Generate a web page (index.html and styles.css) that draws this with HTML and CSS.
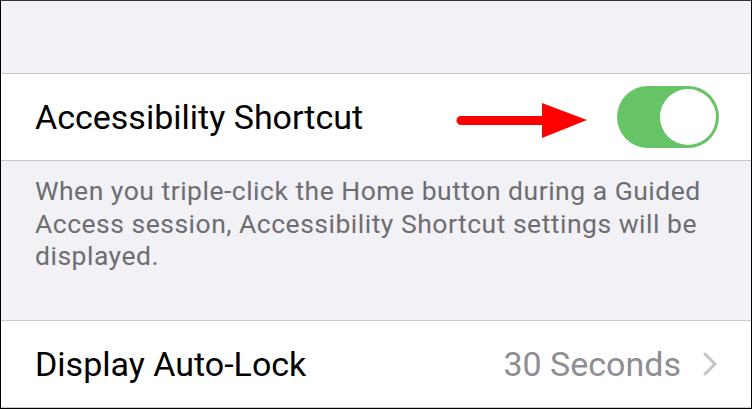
FILE: index.html
```html
<!DOCTYPE html>
<html lang="en">
<head>
  <meta charset="UTF-8">
  <meta name="viewport" content="width=device-width, initial-scale=1.0">
  <title>Guided Access</title>
  <link rel="stylesheet" href="styles.css">
</head>
<body>
  <div class="screen">
    <div class="spacer"></div>

    <div class="row">
      <span class="label">Accessibility Shortcut</span>
      <!-- annotation arrow -->
      <svg class="arrow" width="134" height="37" viewBox="0 0 134 37">
        <line x1="6" y1="17.5" x2="90" y2="17.5" stroke="#ff0000" stroke-width="9" stroke-linecap="round"/>
        <polygon points="87,0 132,17 87,35" fill="#ff0000"/>
      </svg>
      <div class="toggle on"><div class="knob"></div></div>
    </div>

    <p class="footer">When you triple-click the Home button during a Guided Access session, Accessibility Shortcut settings will be displayed.</p>

    <div class="row">
      <span class="label">Display Auto-Lock</span>
      <span class="value">30 Seconds</span>
      <svg class="chevron" width="14" height="24" viewBox="0 0 14 24">
        <polyline points="2,2 12,12 2,22" fill="none" stroke="#c4c4c9" stroke-width="3" stroke-linecap="round" stroke-linejoin="round"/>
      </svg>
    </div>
  </div>
</body>
</html>
```

FILE: styles.css
```css
html, body {
  margin: 0;
  padding: 0;
}
body {
  font-family: Roboto, "Liberation Sans", sans-serif;
  background: #fff;
}
.screen {
  width: 752px;
  height: 409px;
  box-sizing: border-box;
  border: 1px solid #000;
  border-top-color: #333;
  background-color: #f1f1f6;
  overflow: hidden;
}
.spacer {
  height: 72px;
}
.row {
  position: relative;
  height: 86px;
  display: flex;
  align-items: center;
  padding: 0 32px 0 34px;
  background: #fff;
  border-top: 1px solid #c8c7cc;
  border-bottom: 1px solid #c8c7cc;
}
.label {
  font-size: 34px;
  color: #000;
  flex: 1;
}
.value {
  font-size: 34px;
  color: #8e8e93;
  margin-right: 22px;
}
.chevron {
  margin-right: 2px;
}
.arrow {
  position: absolute;
  left: 454px;
  top: 29px;
}
.toggle {
  width: 102px;
  height: 62px;
  border-radius: 31px;
  background-color: #e5e5ea;
  position: relative;
}
.toggle.on {
  background-color: #67c466;
}
.knob {
  position: absolute;
  top: 3px;
  right: 3px;
  width: 56px;
  height: 56px;
  border-radius: 50%;
  background: #fff;
}
.footer {
  margin: 0;
  height: 159px;
  box-sizing: border-box;
  padding: 14px 30px 0 34px;
  font-size: 26.5px;
  letter-spacing: 0.5px;
  line-height: 32.5px;
  color: #6d6d72;
}
```
